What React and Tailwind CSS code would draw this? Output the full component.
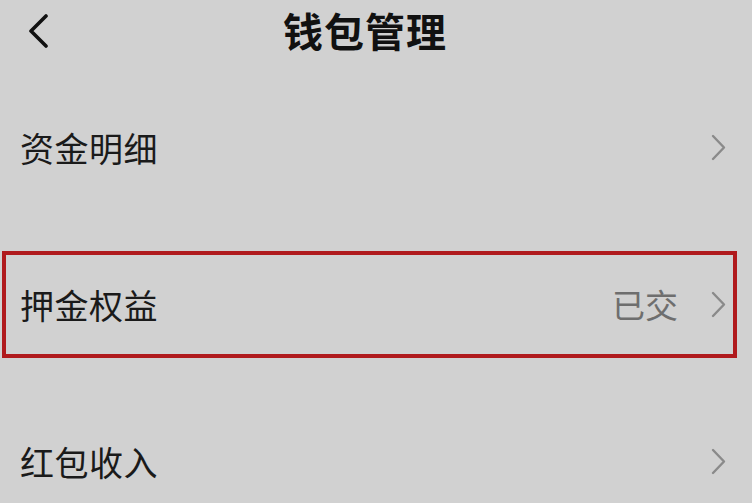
const rows = [
  { label: '资金明细' },
  { label: '押金权益', value: '已交', highlight: true },
  { label: '红包收入' },
]

function ChevronRight() {
  return (
    <svg width="17" height="27" viewBox="0 0 17 27" fill="none" className="shrink-0">
      <path d="M3 2 L14 13.5 L3 25" stroke="#8a8a8a" strokeWidth="2.4" strokeLinecap="round" strokeLinejoin="round" />
    </svg>
  )
}

function ChevronLeft() {
  return (
    <svg width="24" height="34" viewBox="0 0 24 34" fill="none">
      <path d="M19 2 L4 17 L19 32" stroke="#111" strokeWidth="3.6" strokeLinecap="round" strokeLinejoin="round" />
    </svg>
  )
}

export default function App() {
  return (
    <div
      className="w-[752px] h-[503px] overflow-hidden bg-[#d1d1d1] flex flex-col"
      style={{ fontFamily: '"Noto Sans CJK SC", "Noto Sans", sans-serif' }}
    >
      <div className="relative h-[60px] flex items-center justify-center shrink-0">
        <div className="absolute left-[27px] top-[14px]">
          <ChevronLeft />
        </div>
        <h1 className="text-[40px] font-bold text-[#111] leading-none tracking-[1px] -ml-[22px]">钱包管理</h1>
      </div>

      <div className="flex flex-col gap-[50px] mt-[34px]">
        {rows.map((row) => (
          <div
            key={row.label}
            className={
              'ml-[2px] w-[735px] h-[107px] flex items-center pl-[14px] pr-[6px] border-4 ' +
              (row.highlight ? 'border-[#b01a1d]' : 'border-transparent')
            }
          >
            <span className="text-[34px] leading-none text-[#1a1a1a] tracking-[0.5px]">{row.label}</span>
            <div className="ml-auto flex items-center">
              {row.value && (
                <span className="text-[33px] leading-none text-[#6e6e6e] mr-[32px]">{row.value}</span>
              )}
              <ChevronRight />
            </div>
          </div>
        ))}
      </div>
    </div>
  )
}
